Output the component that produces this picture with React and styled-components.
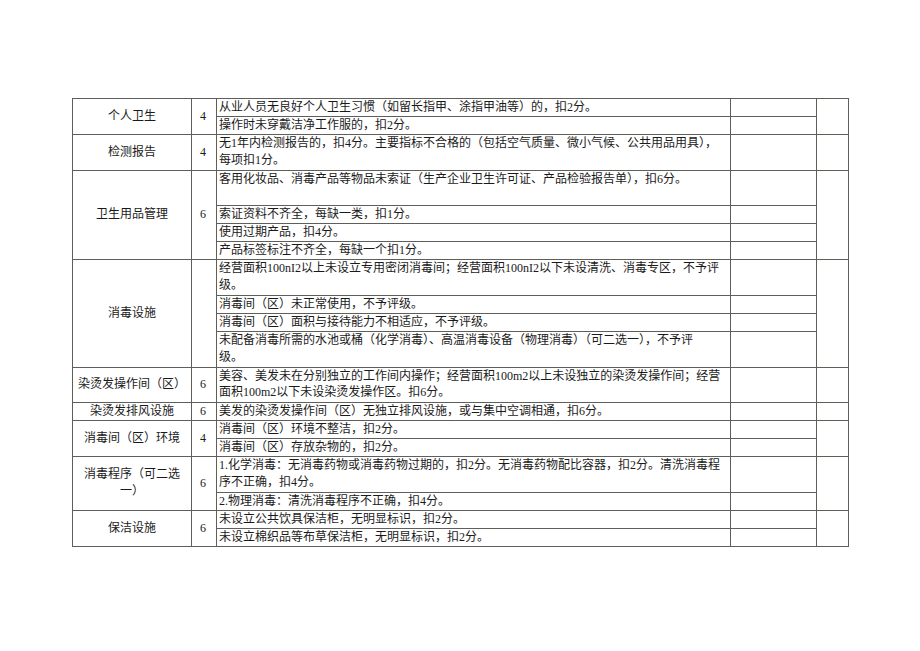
import React from "react";
import styled, { createGlobalStyle } from "styled-components";

const GlobalStyle = createGlobalStyle`
  html, body {
    margin: 0;
    padding: 0;
    background: #ffffff;
  }
  body {
    font-family: "Liberation Serif", "Noto Sans CJK SC", serif;
    color: #1a1a1a;
  }
`;

const groups = [
  {
    name: ["个人卫生"],
    score: "4",
    items: [
      { lines: ["从业人员无良好个人卫生习惯（如留长指甲、涂指甲油等）的，扣2分。"] },
      { lines: ["操作时未穿戴洁净工作服的，扣2分。"] },
    ],
  },
  {
    name: ["检测报告"],
    score: "4",
    items: [
      {
        lines: [
          "无1年内检测报告的，扣4分。主要指标不合格的（包括空气质量、微小气候、公共用品用具），",
          "每项扣1分。",
        ],
      },
    ],
  },
  {
    name: ["卫生用品管理"],
    score: "6",
    items: [
      {
        lines: ["客用化妆品、消毒产品等物品未索证（生产企业卫生许可证、产品检验报告单），扣6分。"],
        tall: true,
      },
      { lines: ["索证资料不齐全，每缺一类，扣1分。"] },
      { lines: ["使用过期产品，扣4分。"] },
      { lines: ["产品标签标注不齐全，每缺一个扣1分。"] },
    ],
  },
  {
    name: ["消毒设施"],
    score: "",
    items: [
      {
        lines: [
          "经营面积100nI2以上未设立专用密闭消毒间；经营面积100nI2以下未设清洗、消毒专区，不予评",
          "级。",
        ],
      },
      { lines: ["消毒间（区）未正常使用，不予评级。"] },
      { lines: ["消毒间（区）面积与接待能力不相适应，不予评级。"] },
      {
        lines: [
          "未配备消毒所需的水池或桶（化学消毒）、高温消毒设备（物理消毒）（可二选一），不予评",
          "级。",
        ],
      },
    ],
  },
  {
    name: ["染烫发操作间（区）"],
    score: "6",
    items: [
      {
        lines: [
          "美容、美发未在分别独立的工作间内操作；经营面积100m2以上未设独立的染烫发操作间；经营",
          "面积100m2以下未设染烫发操作区。扣6分。",
        ],
      },
    ],
  },
  {
    name: ["染烫发排风设施"],
    score: "6",
    items: [{ lines: ["美发的染烫发操作间（区）无独立排风设施，或与集中空调相通，扣6分。"] }],
  },
  {
    name: ["消毒间（区）环境"],
    score: "4",
    items: [
      { lines: ["消毒间（区）环境不整洁，扣2分。"] },
      { lines: ["消毒间（区）存放杂物的，扣2分。"] },
    ],
  },
  {
    name: ["消毒程序（可二选", "一）"],
    score: "6",
    items: [
      {
        lines: [
          "1.化学消毒：无消毒药物或消毒药物过期的，扣2分。无消毒药物配比容器，扣2分。清洗消毒程",
          "序不正确，扣4分。",
        ],
      },
      { lines: ["2.物理消毒：清洗消毒程序不正确，扣4分。"] },
    ],
  },
  {
    name: ["保洁设施"],
    score: "6",
    items: [
      { lines: ["未设立公共饮具保洁柜，无明显标识，扣2分。"] },
      { lines: ["未设立棉织品等布草保洁柜，无明显标识，扣2分。"] },
    ],
  },
];

const columns = [119, 25, 514, 86, 32];

const Page = styled.div`
  padding: 98px 0 0 72px;
  min-height: 651px;
  box-sizing: border-box;
`;

const Sheet = styled.table`
  border-collapse: collapse;
  table-layout: fixed;
  width: 776px;
  font-size: 12px;
  line-height: 16.9px;
`;

const Col = styled.col`
  width: ${(p) => p.$w}px;
`;

const Cell = styled.td`
  border: 1px solid #5f5f5a;
  padding: 0 2px;
  white-space: nowrap;
  overflow: hidden;
`;

const Category = styled(Cell)`
  text-align: center;
  vertical-align: middle;
`;

const Score = styled(Cell)`
  text-align: center;
  vertical-align: middle;
  padding: 0 2px 0 0;
`;

const Desc = styled(Cell)`
  vertical-align: top;
  height: ${(p) => (p.$units === 2 ? "34.8px" : "16.9px")};
`;

const Blank = styled(Cell)``;

function Lines({ lines }) {
  return lines.map((l, i) => (
    <React.Fragment key={i}>
      {i > 0 && <br />}
      {l}
    </React.Fragment>
  ));
}

export default function App() {
  return (
    <Page>
      <GlobalStyle />
      <Sheet>
        <colgroup>
          {columns.map((w, i) => (
            <Col key={i} $w={w} />
          ))}
        </colgroup>
        <tbody>
          {groups.map((g, gi) =>
            g.items.map((item, ii) => (
              <tr key={`${gi}-${ii}`}>
                {ii === 0 && (
                  <Category rowSpan={g.items.length}>
                    <Lines lines={g.name} />
                  </Category>
                )}
                {ii === 0 && <Score rowSpan={g.items.length}>{g.score}</Score>}
                <Desc $units={item.tall || item.lines.length > 1 ? 2 : 1}>
                  <Lines lines={item.lines} />
                </Desc>
                <Blank />
                {ii === 0 && <Blank rowSpan={g.items.length} />}
              </tr>
            ))
          )}
        </tbody>
      </Sheet>
    </Page>
  );
}
